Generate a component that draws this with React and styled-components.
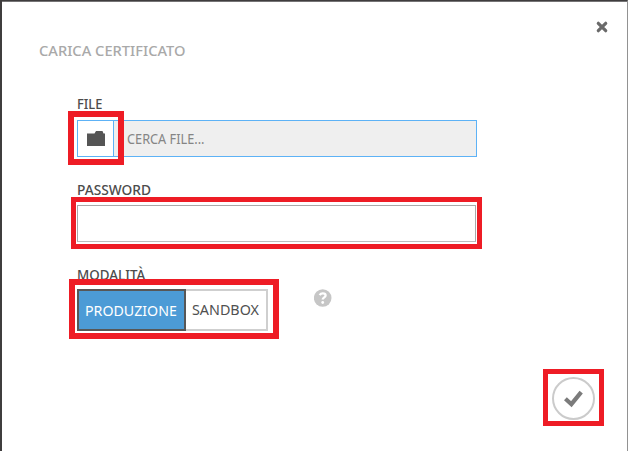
import React from 'react';
import styled, { createGlobalStyle } from 'styled-components';

const GlobalStyle = createGlobalStyle`
  * { box-sizing: border-box; }
  body { margin: 0; background: #fff; overflow: hidden; }
  button, input { font: inherit; margin: 0; padding: 0; border-radius: 0; outline: none; }
`;

const Dialog = styled.main`
  position: relative;
  width: 628px;
  height: 451px;
  padding: 32px 0 0 36px;
  border: 1px solid #3f3d3e;
  border-width: 1px 1px 0 2px;
  border-right-color: #929292;
  box-shadow: inset 0 1px 0 #757475;
  background: #fff;
  font-family: 'Noto Sans', 'Open Sans', sans-serif;
  color: #4c4c4c;
`;

const Text = styled.span`
  display: inline-block;
  vertical-align: top;
  white-space: nowrap;
  font-size: ${(p) => p.$size || 14}px;
  font-weight: ${(p) => p.$weight || 400};
  line-height: 20px;
  transform: scaleX(${(p) => p.$stretch || 1});
  transform-origin: 0 50%;
`;

const Title = styled.h1`
  margin: 7px 0 0 1px;
  height: 20px;
  line-height: 20px;
  color: #a9a9a9;
  font-weight: 400;
`;

const CloseButton = styled.button`
  position: absolute;
  top: 20px;
  right: 19px;
  width: 12px;
  height: 12px;
  border: 0;
  background: none;
  svg { display: block; }
`;

const Form = styled.form`
  display: flex;
  flex-direction: column;
  width: 400px;
  margin: 34px 0 0 39px;
`;

const Label = styled.label`
  height: 20px;
  line-height: 20px;
`;

const Highlight = styled.i`
  position: absolute;
  inset: ${(p) => p.$inset};
  border: ${(p) => p.$thick}px solid #ee1c25;
  pointer-events: none;
`;

const FilePicker = styled.div`
  position: relative;
  display: flex;
  height: 37px;
  margin: 6px 0 23px;
  border: 1px solid #5db2f6;
  background: #efefef;
`;

const BrowseButton = styled.button`
  display: flex;
  align-items: center;
  justify-content: center;
  width: 36px;
  padding: 0 0 2px;
  border: 0;
  border-right: 1px solid #5db2f6;
  background: #fff;
`;

const FileName = styled.div`
  padding: 8px 0 0 13px;
  line-height: 20px;
  color: #858585;
`;

const PasswordField = styled.div`
  position: relative;
  height: 38px;
  margin: 5px 0 22px;
`;

const PasswordInput = styled.input`
  display: block;
  width: 399px;
  height: 37px;
  border: 1px solid #a9a9a9;
  border-bottom-color: #bdbdbd;
  background: #fff;
`;

const ModeRow = styled.div`
  display: flex;
  align-items: flex-start;
  margin-top: 4px;
`;

const Toggle = styled.div`
  position: relative;
  display: flex;
  width: 191px;
  height: 42px;
`;

const Option = styled.button`
  width: ${(p) => (p.$active ? 109 : 82)}px;
  border: 2px solid ${(p) => (p.$active ? '#575757' : '#cfcfcf')};
  ${(p) => !p.$active && 'border-left: 0;'}
  padding: 0 0 ${(p) => (p.$active ? 0 : 2)}px 6px;
  text-align: left;
  line-height: 20px;
  color: ${(p) => (p.$active ? '#fff' : '#505050')};
  background: ${(p) => (p.$active ? '#4c9bd6' : '#fff')};
`;

const Help = styled.span`
  margin: 0 0 0 46px;
  height: 18px;
  svg { display: block; }
`;

const Confirm = styled.div`
  position: absolute;
  right: 32px;
  bottom: 31px;
  width: 43px;
  height: 43px;
`;

const ConfirmButton = styled.button`
  display: flex;
  align-items: center;
  justify-content: center;
  width: 43px;
  height: 43px;
  border: 2px solid #cbcbcb;
  border-radius: 50%;
  background: #fff;
`;

export default function App() {
  return (
    <>
      <GlobalStyle />
      <Dialog>
        <Title><Text $size={15} $weight={500} $stretch={0.977}>CARICA CERTIFICATO</Text></Title>
        <CloseButton aria-label="Chiudi">
          <svg width="12" height="12" viewBox="0 0 12 12">
            <path d="M2.3 2.3 9.7 9.7M9.7 2.3 2.3 9.7" stroke="#6a6a6a" strokeWidth="3.2" strokeLinecap="round" />
          </svg>
        </CloseButton>
        <Form onSubmit={(e) => e.preventDefault()}>
          <Label><Text $weight={500} $stretch={0.92}>FILE</Text></Label>
          <FilePicker>
            <BrowseButton type="button" aria-label="Sfoglia">
              <svg width="18" height="16" viewBox="0 0 18 16">
                <path d="M0 3.5h7.5L9 1h6.5l1 2.5H18V16H0Z" fill="#555" />
              </svg>
            </BrowseButton>
            <FileName><Text $stretch={0.91}>CERCA FILE...</Text></FileName>
            <Highlight $inset="-10px 352px -9px -10px" $thick={6} />
          </FilePicker>
          <Label htmlFor="password"><Text $weight={500} $stretch={0.98}>PASSWORD</Text></Label>
          <PasswordField>
            <PasswordInput id="password" type="password" />
            <Highlight $inset="-8px -5px -6px -6px" $thick={5} />
          </PasswordField>
          <Label><Text $weight={500} $stretch={0.955}>MODALITÀ</Text></Label>
          <ModeRow>
            <Toggle>
              <Option type="button" $active><Text $size={15} $stretch={0.945}>PRODUZIONE</Text></Option>
              <Option type="button"><Text $size={15} $stretch={0.955}>SANDBOX</Text></Option>
              <Highlight $inset="-10px -11px -8px -8px" $thick={6} />
            </Toggle>
            <Help>
              <svg width="18" height="18" viewBox="0 0 18 18">
                <circle cx="8.7" cy="9" r="8.8" fill="#c6c6c6" />
                <path d="M5.7 6.1C6.5 4.7 7.5 4.3 8.8 4.3c1.7 0 2.8.8 2.8 2.1 0 1.9-2.9 2-2.9 4.2" fill="none" stroke="#fff" strokeWidth="2.3" />
                <circle cx="8.7" cy="13.5" r="1.4" fill="#fff" />
              </svg>
            </Help>
          </ModeRow>
        </Form>
        <Confirm>
          <ConfirmButton type="button" aria-label="Conferma">
            <svg width="20" height="18" viewBox="0 0 20 18">
              <path d="M1.4 8.8 7.4 14.2 17.2 2.2" fill="none" stroke="#7b7b7b" strokeWidth="4.2" />
            </svg>
          </ConfirmButton>
          <Highlight $inset="-8px -9px -6px -9px" $thick={5} />
        </Confirm>
      </Dialog>
    </>
  );
}
